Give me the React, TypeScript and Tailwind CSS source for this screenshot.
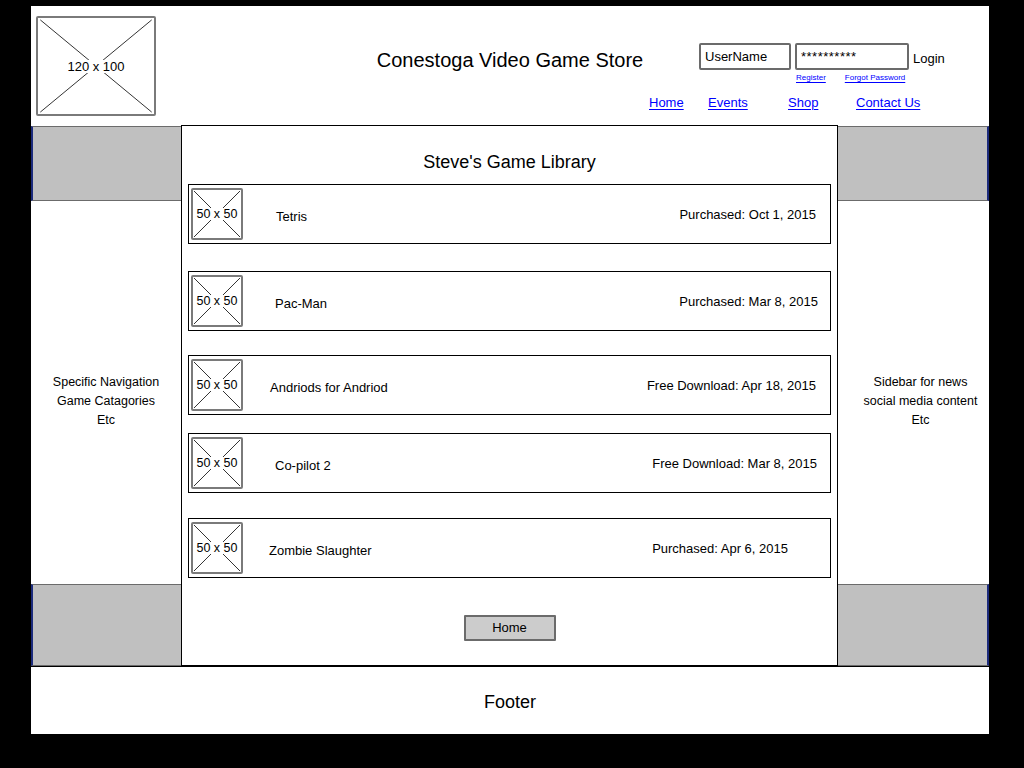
import type { ReactNode } from "react";

type Game = {
  name:   string;
  date:   string;
  gap:    string; // space above the row
  nameMl: string;
  datePr: string;
};

const games: Game[] = [
  { name: "Tetris",              date: "Purchased: Oct 1, 2015",      gap: "mt-[11px]", nameMl: "ml-[33px]", datePr: "pr-[14px]" },
  { name: "Pac-Man",             date: "Purchased: Mar 8, 2015",      gap: "mt-[27px]", nameMl: "ml-[32px]", datePr: "pr-[12px]" },
  { name: "Andriods for Andriod", date: "Free Download: Apr 18, 2015", gap: "mt-[24px]", nameMl: "ml-[27px]", datePr: "pr-[14px]" },
  { name: "Co-pilot 2",          date: "Free Download: Mar 8, 2015",  gap: "mt-[18px]", nameMl: "ml-[32px]", datePr: "pr-[13px]" },
  { name: "Zombie Slaughter",    date: "Purchased: Apr 6, 2015",      gap: "mt-[25px]", nameMl: "ml-[26px]", datePr: "pr-[42px]" },
];

const sketch = "font-['Liberation_Sans',Arial,sans-serif]";

function Placeholder({ label, className, textSize }: { label: string; className: string; textSize: string }) {
  return (
    <div className={`relative shrink-0 rounded-[2px] border-2 border-[#7a7a7a] bg-white ${className}`}>
      <svg className="absolute inset-0 h-full w-full" preserveAspectRatio="none" viewBox="0 0 100 100">
        <line x1="2" y1="2" x2="98" y2="98" stroke="#333" strokeWidth="1" vectorEffect="non-scaling-stroke" />
        <line x1="98" y1="2" x2="2" y2="98" stroke="#333" strokeWidth="1" vectorEffect="non-scaling-stroke" />
      </svg>
      <div className="absolute inset-0 flex items-center justify-center">
        <span className={`bg-white leading-none text-black ${textSize} font-['Liberation_Sans',Arial,sans-serif]`}>{label}</span>
      </div>
    </div>
  );
}

function NavLink({ children, className = "" }: { children: ReactNode; className?: string }) {
  return <a className={`cursor-pointer text-[#0000ff] underline underline-offset-2 ${className}`}>{children}</a>;
}

function GrayBlock({ side, h }: { side: "left" | "right"; h: string }) {
  return (
    <div
      className={`${h} border-y border-[#6b6b6b] bg-[#c0c0c0] ${
        side === "left" ? "border-l-2 border-l-[#1c2b7c]" : "border-r-2 border-r-[#1c2b7c]"
      }`}
    />
  );
}

function Sidebar({ side, lines, textPad }: { side: "left" | "right"; lines: string[]; textPad: string }) {
  return (
    <div className="flex h-full flex-col">
      <GrayBlock side={side} h="h-[75px]" />
      <div className={`flex flex-1 flex-col items-center justify-center pt-[18px] text-[12.5px] leading-[19px] text-black ${textPad}`}>
        {lines.map((l) => (
          <span key={l}>{l}</span>
        ))}
      </div>
      <GrayBlock side={side} h="h-[82px]" />
    </div>
  );
}

function GameRow({ game }: { game: Game }) {
  return (
    <div className={`flex h-[60px] items-center border border-black bg-white pl-[2px] text-[13px] text-black ${game.gap}`}>
      <Placeholder label="50 x 50" className="h-[52px] w-[52px]" textSize="text-[12.5px]" />
      <span className={`${game.nameMl} mt-[5px]`}>{game.name}</span>
      <span className={`ml-auto mt-[2px] ${game.datePr}`}>{game.date}</span>
    </div>
  );
}

export default function App() {
  return (
    <div className={`h-[768px] w-[1024px] overflow-hidden bg-black pl-[31px] pt-[6px] ${sketch}`}>
      <div className="flex h-[728px] w-[958px] flex-col bg-white">
        {/* header */}
        <header className="flex h-[120px] shrink-0">
          <div className="w-[340px] pl-[5px] pt-[10px]">
            <Placeholder label="120 x 100" className="h-[100px] w-[120px]" textSize="text-[13px]" />
          </div>
          <div className="flex w-[278px] justify-center whitespace-nowrap pt-[39px] text-[20px] text-black">
            Conestoga Video Game Store
          </div>
          <div className="flex w-[340px] flex-col pt-[37px]">
            <div className="ml-[50px] flex items-center text-[13px] text-black">
              <div className="flex h-[27px] w-[92px] items-center rounded-[2px] border-2 border-[#6b6b6b] pl-[4px]">UserName</div>
              <div className="ml-[4px] flex h-[27px] w-[114px] items-start rounded-[2px] border-2 border-[#6b6b6b] pl-[4px] pt-[2px] tracking-[0.5px]">
                **********
              </div>
              <span className="ml-[4px] mt-[4px]">Login</span>
            </div>
            <div className="ml-[147px] mt-[2px] flex text-[8px] leading-[12px]">
              <NavLink className="decoration-1 underline-offset-1">Register</NavLink>
              <NavLink className="ml-[19px] decoration-1 underline-offset-1">Forgot Password</NavLink>
            </div>
            <div className="mt-[9px] flex text-[13px]">
              <NavLink className="w-[59px]">Home</NavLink>
              <NavLink className="w-[80px]">Events</NavLink>
              <NavLink className="w-[68px]">Shop</NavLink>
              <NavLink>Contact Us</NavLink>
            </div>
          </div>
        </header>

        {/* body */}
        <div className="flex h-[540px] shrink-0">
          <div className="w-[150px]">
            <Sidebar side="left" lines={["Specific Navigation", "Game Catagories", "Etc"]} textPad="" />
          </div>
          <main className="-mt-px flex h-[541px] w-[657px] flex-col border border-black px-[6px]">
            <h1 className="mt-[25px] text-center text-[18px] leading-[22px] text-black">Steve's Game Library</h1>
            {games.map((g) => (
              <GameRow key={g.name} game={g} />
            ))}
            <button className="mx-auto mt-[37px] h-[26px] w-[92px] rounded-[1px] border-2 border-[#6b6b6b] bg-[#cccccc] text-[13px] text-black">
              Home
            </button>
          </main>
          <div className="w-[151px]">
            <Sidebar side="right" lines={["Sidebar for news", "social media content", "Etc"]} textPad="pl-[14px]" />
          </div>
        </div>

        {/* footer */}
        <footer className="flex flex-1 items-center justify-center border-t border-black pt-[3px] text-[18px] text-black">
          Footer
        </footer>
      </div>
    </div>
  );
}
